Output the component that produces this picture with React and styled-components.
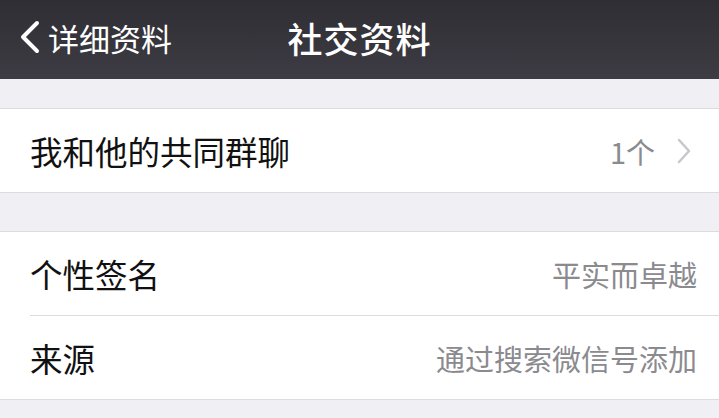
import styled, { createGlobalStyle } from 'styled-components'
import React from "react";

const GlobalStyle = createGlobalStyle`
html, body {
  margin: 0;
  padding: 0;
  background-color: #efeff4;
  font-family: "Noto Sans CJK SC", "Noto Sans", sans-serif;
}
`

const Screen = styled.div`
width: 719px;
height: 418px;
overflow: hidden;
background-color: #efeff4;
`

const NavBar = styled.div`
height: 79px;
box-sizing: border-box;
padding-bottom: 5px;
background: linear-gradient(#2f2e34, #3d3c44);
display: grid;
grid-template-columns: 1fr auto 1fr;
align-items: center;
color: white;
`

const Back = styled.div`
display: flex;
align-items: center;
padding-left: 20px;
font-size: 31px;
gap: 8px;
`

const Title = styled.div`
font-size: 35px;
font-weight: 500;
letter-spacing: 1px;
`

const Group = styled.div`
background-color: white;
border-top: 1px solid #dcdce0;
border-bottom: 1px solid #dcdce0;
margin-top: ${props => props.gap}px;
`

const Row = styled.div`
height: 83px;
margin-left: 30px;
padding-right: ${props => props.arrow ? 28 : 22}px;
display: flex;
align-items: center;
justify-content: space-between;
border-top: ${props => props.first ? 'none' : '1px solid #dcdce0'};
`

const Label = styled.div`
font-size: 32.5px;
color: #111;
`

const Value = styled.div`
display: flex;
align-items: center;
gap: 22px;
font-size: 29px;
color: #8a8a8f;
`

const App = () => {
  return (
    <Screen>
      <GlobalStyle />
      <NavBar>
        <Back>
          <svg width="20" height="34" viewBox="0 0 20 34">
            <path d="M17 3 L3 17 L17 31" fill="none" stroke="white" strokeWidth="4" strokeLinecap="round" strokeLinejoin="round" />
          </svg>
          <span>详细资料</span>
        </Back>
        <Title>社交资料</Title>
        <div />
      </NavBar>
      <Group gap={29}>
        <Row first arrow>
          <Label>我和他的共同群聊</Label>
          <Value>
            <span>1个</span>
            <svg width="14" height="26" viewBox="0 0 14 26">
              <path d="M2 2 L12 13 L2 24" fill="none" stroke="#c7c7cc" strokeWidth="2.5" strokeLinecap="round" strokeLinejoin="round" />
            </svg>
          </Value>
        </Row>
      </Group>
      <Group gap={38}>
        <Row first>
          <Label>个性签名</Label>
          <Value>平实而卓越</Value>
        </Row>
        <Row>
          <Label>来源</Label>
          <Value>通过搜索微信号添加</Value>
        </Row>
      </Group>
    </Screen>
  );
};

export default App;
